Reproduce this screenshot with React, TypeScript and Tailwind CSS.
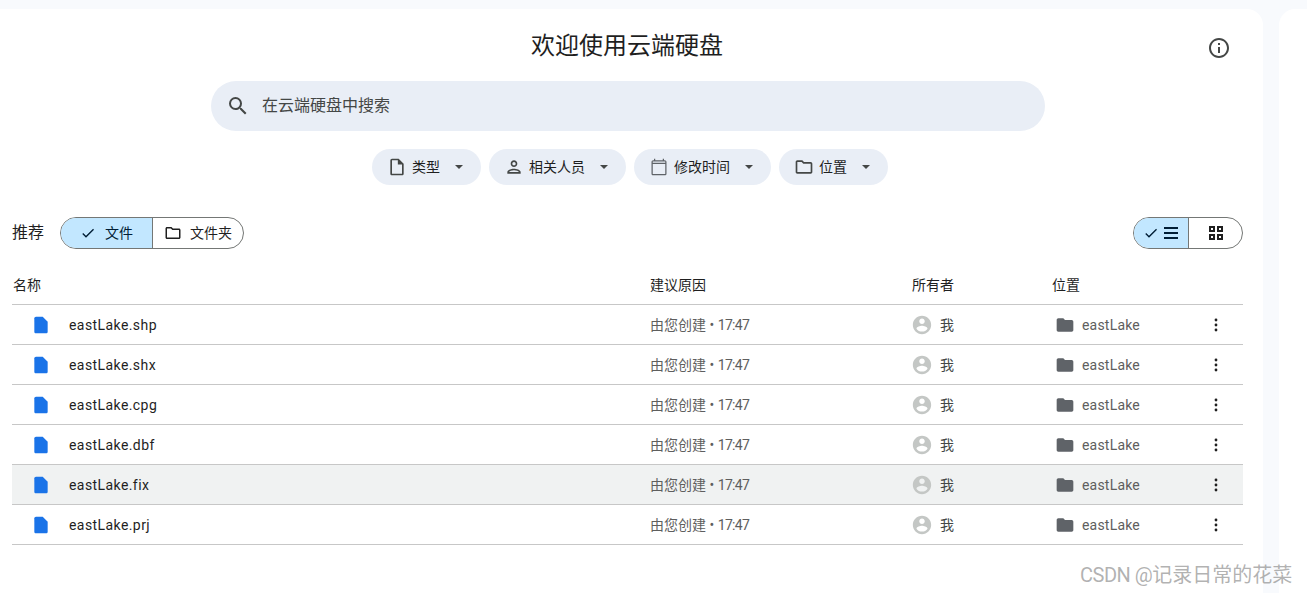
const FILE_OUTLINE = 'M14 2H6c-1.1 0-2 .9-2 2v16c0 1.1.9 2 2 2h12c1.1 0 2-.9 2-2V8l-6-6zM6 20V4h7v5h5v11H6z';
const PERSON_OUTLINE = 'M12 6c1.1 0 2 .9 2 2s-.9 2-2 2-2-.9-2-2 .9-2 2-2m0 10c2.7 0 5.8 1.29 6 2H6c.23-.72 3.31-2 6-2m0-12C9.79 4 8 5.79 8 8s1.79 4 4 4 4-1.79 4-4-1.79-4-4-4zm0 10c-2.67 0-8 1.34-8 4v2h16v-2c0-2.66-5.33-4-8-4z';
const CALENDAR = 'M19 4h-1V2h-1.5v2h-9V2H6v2H5c-1.1 0-2 .9-2 2v14c0 1.1.9 2 2 2h14c1.1 0 2-.9 2-2V6c0-1.1-.9-2-2-2zm.5 16.5h-15V8.5h15v12zm0-13.5h-15V5.5h15V7z';
const FOLDER_OUTLINE = 'M20 6h-8l-2-2H4c-1.1 0-2 .9-2 2v12c0 1.1.9 2 2 2h16c1.1 0 2-.9 2-2V8c0-1.1-.9-2-2-2zm0 12H4V6h5.17l2 2H20v10z';
const FOLDER = 'M10 4H4c-1.1 0-1.99.9-1.99 2L2 18c0 1.1.9 2 2 2h16c1.1 0 2-.9 2-2V8c0-1.1-.9-2-2-2h-8l-2-2z';
const FILE = 'M14 2H6c-1.1 0-2 .9-2 2v16c0 1.1.9 2 2 2h12c1.1 0 2-.9 2-2V8l-6-6z';
const ACCOUNT = 'M12 2C6.48 2 2 6.48 2 12s4.48 10 10 10 10-4.48 10-10S17.52 2 12 2zm0 3c1.66 0 3 1.34 3 3s-1.34 3-3 3-3-1.34-3-3 1.34-3 3-3zm0 14.2c-2.5 0-4.71-1.28-6-3.22.03-1.99 4-3.08 6-3.08 1.99 0 5.97 1.09 6 3.08-1.29 1.94-3.5 3.22-6 3.22z';
const CHECK = 'M9 16.17L4.83 12l-1.42 1.41L9 19 21 7l-1.41-1.41z';

const Icon = ({ d, className }: { d: string; className: string }) => (
  <svg viewBox="0 0 24 24" fill="currentColor" className={className}>
    <path d={d} />
  </svg>
);

const filters = [
  { label: '类型', icon: FILE_OUTLINE, width: 'w-[109px]', iconColor: 'text-[#444746]' },
  { label: '相关人员', icon: PERSON_OUTLINE, width: 'w-[137px]', iconColor: 'text-[#444746]' },
  { label: '修改时间', icon: CALENDAR, width: 'w-[137px]', iconColor: 'text-[#5f6368]' },
  { label: '位置', icon: FOLDER_OUTLINE, width: 'w-[109px]', iconColor: 'text-[#444746]' },
];

const files = ['eastLake.shp', 'eastLake.shx', 'eastLake.cpg', 'eastLake.dbf', 'eastLake.fix', 'eastLake.prj'];

const FilterChip = ({ label, icon, width, iconColor }: (typeof filters)[number]) => (
  <div className={`flex h-9 items-center rounded-[18px] bg-[#e9eef6] pl-[15px] ${width}`}>
    <Icon d={icon} className={`h-[20px] w-[20px] ${iconColor}`} />
    <span className="ml-[5px] text-sm text-[#1f1f1f]">{label}</span>
    <svg viewBox="0 0 8 4" className="ml-[15px] h-[4px] w-[8px] fill-[#444746]">
      <path d="M0 0h8L4 4z" />
    </svg>
  </div>
);

const FileRow = ({ name, hovered }: { name: string; hovered: boolean }) => (
  <div className={`flex h-10 items-center border-b border-[#c7c7c7] ${hovered ? 'bg-[#f0f2f2]' : ''}`}>
    <div className="flex w-[638px] items-center pl-[19px]">
      <Icon d={FILE} className="h-5 w-5 text-[#1a73e8]" />
      <span className="ml-[18px] text-sm tracking-[0.42px] text-[#1f1f1f]">{name}</span>
    </div>
    <div className="w-[262px] text-sm text-[#5e5e5e]">
      由您创建 • <span className="tracking-[-0.65px]">17:47</span>
    </div>
    <div className="flex w-[140px] items-center">
      <Icon d={ACCOUNT} className="h-[22px] w-[22px] -ml-[1px] text-[#c4c7c5]" />
      <span className="ml-[7px] text-sm text-[#444746]">我</span>
    </div>
    <div className="flex w-[162px] items-center pl-[3px]">
      <Icon d={FOLDER} className="h-[20px] w-[20px] text-[#5f6368]" />
      <span className="ml-[7px] text-sm tracking-[0.2px] text-[#5e5e5e]">eastLake</span>
    </div>
    <svg viewBox="0 0 4 14" className="h-[14px] w-[4px] fill-[#1f1f1f]">
      <circle cx="2" cy="2" r="1.4" />
      <circle cx="2" cy="7" r="1.4" />
      <circle cx="2" cy="12" r="1.4" />
    </svg>
  </div>
);

export default function App() {
  return (
    <div className="relative flex h-[593px] w-[1307px] overflow-hidden bg-[#f8fafd] pt-[9px] font-['Roboto','Noto_Sans_CJK_SC',sans-serif] text-[#1f1f1f]">
      <main className="h-full w-[1263px] rounded-tr-[16px] bg-white">
        <div className="flex h-[72px] items-start">
          <h1 className="ml-[531px] mt-[19px] text-2xl leading-[36px] font-normal text-[#1f1f1f]">欢迎使用云端硬盘</h1>
          <Icon d="M11 7h2v2h-2zm0 4h2v6h-2zm1-9C6.48 2 2 6.48 2 12s4.48 10 10 10 10-4.48 10-10S17.52 2 12 2zm0 18c-4.41 0-8-3.59-8-8s3.59-8 8-8 8 3.59 8 8-3.59 8-8 8z" className="ml-[484px] mt-[27px] h-6 w-6 text-[#444746]" />
        </div>

        <div className="ml-[211px] flex h-[50px] w-[834px] items-center rounded-[25px] bg-[#e9eef6] pl-[15px]">
          <Icon d="M15.5 14h-.79l-.28-.27A6.471 6.471 0 0 0 16 9.5 6.5 6.5 0 1 0 9.5 16c1.61 0 3.09-.59 4.23-1.57l.27.28v.79l5 4.99L20.49 19l-4.99-5zm-6 0C7.01 14 5 11.99 5 9.5S7.01 5 9.5 5 14 7.01 14 9.5 11.99 14 9.5 14z" className="h-6 w-6 text-[#444746]" />
          <span className="ml-[12px] text-base text-[#444746]">在云端硬盘中搜索</span>
        </div>

        <div className="ml-[372px] mt-[18px] flex gap-2">
          {filters.map((f) => (
            <FilterChip key={f.label} {...f} />
          ))}
        </div>

        <div className="mr-[20px] ml-[12px] mt-[32px] flex items-center justify-between">
          <div className="flex items-center">
            <span className="text-base">推荐</span>
            <div className="ml-[16px] flex h-8 w-[184px] overflow-hidden rounded-2xl border border-[#747775]">
              <div className="flex w-[92px] items-center border-r border-[#747775] bg-[#c2e7ff] pl-[19px] text-[#001d35]">
                <Icon d={CHECK} className="h-4 w-4" />
                <span className="ml-[9px] text-sm text-[#001d35]">文件</span>
              </div>
              <div className="flex flex-1 items-center pl-[11px]">
                <Icon d={FOLDER_OUTLINE} className="h-[18px] w-[18px] text-[#1f1f1f]" />
                <span className="ml-[8px] text-sm">文件夹</span>
              </div>
            </div>
          </div>
          <div className="flex h-8 w-[110px] overflow-hidden rounded-2xl border border-[#747775]">
            <div className="flex w-[55px] items-center gap-[5px] border-r border-[#747775] bg-[#c2e7ff] pl-[9px] text-[#001d35]">
              <Icon d={CHECK} className="h-4 w-4" />
              <svg viewBox="0 0 14 12" className="h-3 w-[14px] fill-current">
                <rect y="0" width="14" height="2" />
                <rect y="5" width="14" height="2" />
                <rect y="10" width="14" height="2" />
              </svg>
            </div>
            <div className="flex flex-1 items-center justify-center text-[#1f1f1f]">
              <svg viewBox="0 0 16 16" className="h-4 w-4 fill-none stroke-current stroke-2">
                <rect x="2" y="2" width="4" height="4" />
                <rect x="10" y="2" width="4" height="4" />
                <rect x="2" y="10" width="4" height="4" />
                <rect x="10" y="10" width="4" height="4" />
              </svg>
            </div>
          </div>
        </div>

        <div className="ml-[12px] mt-[16px] w-[1231px]">
          <div className="flex h-[40px] items-center border-b border-[#c7c7c7] text-sm text-[#1f1f1f]">
            <div className="w-[638px] pl-[1px]">名称</div>
            <div className="w-[262px]">建议原因</div>
            <div className="w-[140px]">所有者</div>
            <div>位置</div>
          </div>
          {files.map((name) => (
            <FileRow key={name} name={name} hovered={name === 'eastLake.fix'} />
          ))}
        </div>
      </main>

      <aside className="ml-4 h-full flex-1 rounded-tl-[16px] bg-white" />

      <div className="absolute left-[1080px] top-[561px] text-xl leading-[28px] whitespace-nowrap text-[#8f8f8f]/70">
        <span className="tracking-[-0.5px]">CSDN @</span>记录日常的花菜
      </div>
    </div>
  );
}
